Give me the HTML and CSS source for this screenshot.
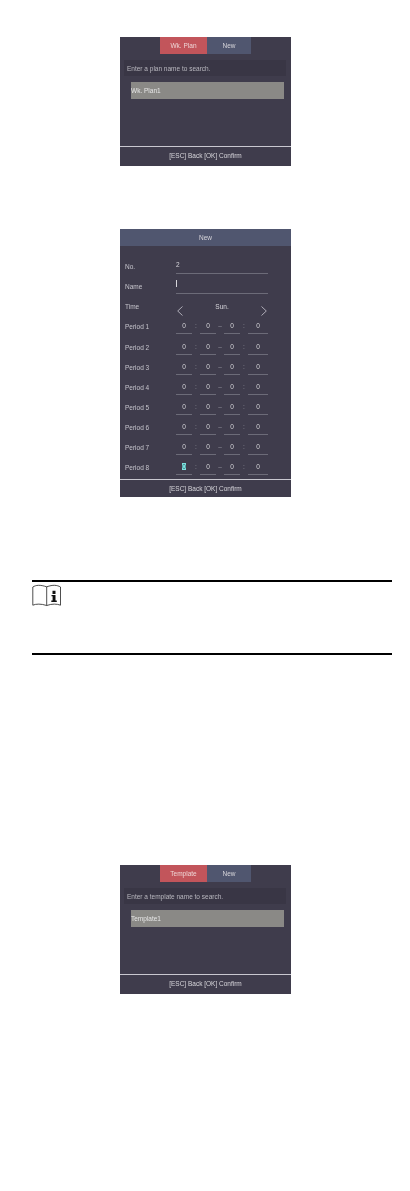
FILE: index.html
```html
<!DOCTYPE html>
<html lang="en">
<head>
<meta charset="utf-8">
<title>Plans</title>
<link rel="stylesheet" href="styles.css">
</head>
<body>
<section class="screen list first">
  <div class="tabs"><span class="tab active">Wk. Plan</span><span class="tab">New</span></div>
  <div class="search">Enter a plan name to search.</div>
  <div class="item">Wk. Plan1</div>
  <div class="spacer"></div>
  <div class="footer">[ESC] Back [OK] Confirm</div>
</section>

<section class="screen form">
  <div class="title">New</div>
  <div class="fields">
    <div class="row"><span class="label">No.</span><span class="input">2</span></div>
    <div class="row"><span class="label">Name</span><span class="input"><i class="caret"></i></span></div>
    <div class="row"><span class="label">Time</span>
      <div class="day">
        <svg class="chev" viewBox="0 0 6 10"><path d="M5.500 .5 .7 5l4.800 4.500"/></svg>
        <span class="dayname">Sun.</span>
        <svg class="chev" viewBox="0 0 6 10"><path d="M.5 .5 5.300 5 .5 9.500"/></svg>
      </div>
    </div>
    <div class="row"><span class="label">Period 1</span><div class="period"><span>0</span><b>:</b><span>0</span><b>–</b><span>0</span><b>:</b><span>0</span></div></div>
    <div class="row"><span class="label">Period 2</span><div class="period"><span>0</span><b>:</b><span>0</span><b>–</b><span>0</span><b>:</b><span>0</span></div></div>
    <div class="row"><span class="label">Period 3</span><div class="period"><span>0</span><b>:</b><span>0</span><b>–</b><span>0</span><b>:</b><span>0</span></div></div>
    <div class="row"><span class="label">Period 4</span><div class="period"><span>0</span><b>:</b><span>0</span><b>–</b><span>0</span><b>:</b><span>0</span></div></div>
    <div class="row"><span class="label">Period 5</span><div class="period"><span>0</span><b>:</b><span>0</span><b>–</b><span>0</span><b>:</b><span>0</span></div></div>
    <div class="row"><span class="label">Period 6</span><div class="period"><span>0</span><b>:</b><span>0</span><b>–</b><span>0</span><b>:</b><span>0</span></div></div>
    <div class="row"><span class="label">Period 7</span><div class="period"><span>0</span><b>:</b><span>0</span><b>–</b><span>0</span><b>:</b><span>0</span></div></div>
    <div class="row"><span class="label">Period 8</span><div class="period"><span><em class="cursor">0</em></span><b>:</b><span>0</span><b>–</b><span>0</span><b>:</b><span>0</span></div></div>
  </div>
  <div class="footer">[ESC] Back [OK] Confirm</div>
</section>

<section class="note">
  <svg class="noteicon" viewBox="0 0 30 23">
    <path class="thin" d="M.8 3C4 1 8 .6 14.700 2.800C21 .6 25 1 28.500 3V21.200C25 19.800 20 19.600 14.700 21.500C9 19.600 4 19.800 .8 21.200Z"/>
    <path class="thin" d="M14.700 2.800V21.500"/>
    <path class="bold" d="M20.500 6.700h3v3.200h-3zM19.500 11h4v5.600h1.300v1.300h-5.500v-1.300h1.300v-4.300h-1.100z"/>
  </svg>
</section>

<section class="screen list last">
  <div class="tabs"><span class="tab active">Template</span><span class="tab">New</span></div>
  <div class="search">Enter a template name to search.</div>
  <div class="item">Template1</div>
  <div class="spacer"></div>
  <div class="footer">[ESC] Back [OK] Confirm</div>
</section>
</body>
</html>
```

FILE: styles.css
```css
* { box-sizing: border-box; }
html, body { margin: 0; padding: 0; background: #fff; }
body {
  width: 410px;
  height: 1191px;
  overflow: hidden;
  padding-top: 37px;
  font-family: "Liberation Sans", Arial, sans-serif;
}
.screen {
  width: 171px;
  margin-left: 120px;
  background: #3f3c4c;
  color: #d6d5da;
  font-size: 6.500px;
  display: flex;
  flex-direction: column;
  filter: blur(.3px);
  will-change: transform;
}
.list { height: 129px; }
.tabs { display: flex; margin-left: 40px; height: 17px; }
.tab {
  width: 44px;
  display: flex;
  align-items: center;
  justify-content: center;
  background: #50566f;
}
.tab.active { width: 47px; background: #c2555b; color: #eed5d5; }
.search {
  margin: 6px 5px 0 4px;
  height: 16px;
  padding-left: 3px;
  display: flex;
  align-items: center;
  background: #393645;
  color: #b9b8bf;
}
.item {
  margin: 6px 7px 0 11px;
  height: 17px;
  display: flex;
  align-items: center;
  background: #8a8986;
  color: #e6e6e6;
}
.spacer { flex: 1; }
.footer {
  height: 20px;
  flex: none;
  padding-bottom: 2px;
  border-top: 1px solid #c9c8d0;
  display: flex;
  align-items: center;
  justify-content: center;
}
.form { margin-top: 63px; height: 268px; }
.form .footer { height: 18px; padding-bottom: 0; }
.title {
  height: 17px;
  flex: none;
  display: flex;
  align-items: center;
  justify-content: center;
  background: #50566f;
}
.fields { flex: 1; min-height: 0; padding: 13px 0 0 5px; display: flex; flex-direction: column; }
.row { display: flex; height: 20.150px; flex: none; }
.label { width: 51px; flex: none; padding-top: 3px; line-height: 9px; color: #c6c5cc; }
.input {
  width: 92px;
  height: 15px;
  border-bottom: 1px solid #6c6b78;
  line-height: 12px;
}
.caret { display: inline-block; width: 1px; height: 7px; background: #d6d5da; }
.day { width: 92px; height: 17px; display: flex; justify-content: space-between; padding: 0 1px; }
.dayname { line-height: 16px; }
.chev { width: 6px; height: 10px; margin-top: 7px; }
.chev path { fill: none; stroke: #c9c8d0; stroke-width: .8; }
.period { display: flex; width: 92px; height: 15px; line-height: 13px; }
.period span {
  width: 16px;
  text-align: center;
  border-bottom: 1px solid #6c6b78;
  flex: none;
}
.period span:last-child { width: 20px; }
.period b { width: 8px; text-align: center; font-weight: normal; color: #8f8e99; flex: none; }
.cursor { font-style: normal; background: #7fe3e0; color: #2c6a70; padding: 0 .5px; }
.note {
  margin: 83px 18px 0 32px;
  height: 75px;
  border-top: 2px solid #000;
  border-bottom: 2px solid #000;
}
.noteicon { display: block; width: 30px; height: 23px; margin-top: 2px; }
.thin { fill: none; stroke: #222; stroke-width: .8; }
.bold { fill: #111; }
.last { margin-top: 210px; }
```
